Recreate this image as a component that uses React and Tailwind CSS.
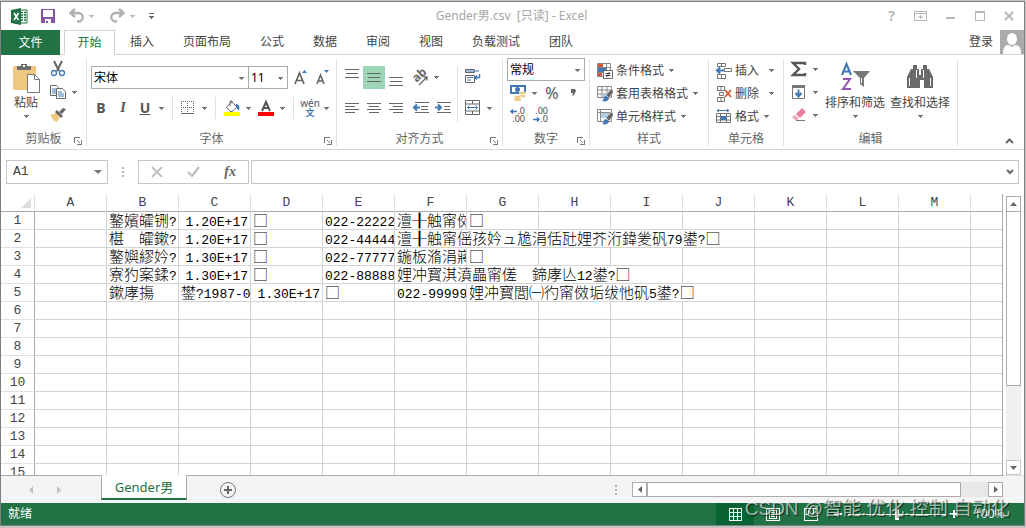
import React from "react";

const COLUMNS = ["A", "B", "C", "D", "E", "F", "G", "H", "I", "J", "K", "L", "M"];

// each cell: [text, colSpan, align]
const ROWS = [
    [[""], ["鐜嬪皬铏?"], ["1.20E+17", 1, "right"], ["□"], ["022-22222222"], ["澶╂触甯傚"], ["□"]],
    [[""], ["椹\u3000皬鏉?"], ["1.20E+17", 1, "right"], ["□"], ["022-44444444"], ["澶╂触甯傜孩妗ュ尯涓佸瓧娌芥洐鍏夎矾79鍙?□", 5]],
    [[""], ["鐜嬩繆妗?"], ["1.30E+17", 1, "right"], ["□"], ["022-77777777"], ["鍦板潃涓嶈"], ["□"]],
    [[""], ["寮犳案鍒?"], ["1.30E+17", 1, "right"], ["□"], ["022-88888888"], ["娌冲寳淇濆畾甯傞\u3000鍗庨亾12鍙?□", 4]],
    [[""], ["鏉庨摥"], ["鐢?1987-01"], ["1.30E+17", 1, "right"], ["□"], ["022-99999999"], ["娌冲寳閭㈠彴甯傚垢绂忚矾5鍙?□", 4]],
    [], [], [], [], [], [], [], [], [], [],
];

const TABS = ["插入", "页面布局", "公式", "数据", "审阅", "视图", "负载测试", "团队"];

const Caret = ({ className = "" }) => (
    <svg className={`shrink-0 ${className}`} width="5" height="3" viewBox="0 0 5 3" fill="#777" shapeRendering="crispEdges">
        <path d="M0 0h5v1H4v1H3v1H2V2H1V1H0z" />
    </svg>
);

const Icon = ({ w = 16, h = 16, children, ...rest }) => (
    <svg className="shrink-0 overflow-visible" width={w} height={h} viewBox={`0 0 ${w} ${h}`} fill="none" {...rest}>
        {children}
    </svg>
);

const IconButton = ({ label, className = "", children }) => (
    <button aria-label={label} className={`flex items-center justify-center shrink-0 ${className}`}>
        {children}
    </button>
);

const Select = ({ label, value, className = "" }) => (
    <div className={`relative border border-[#ababab] bg-white ${className}`}>
        <select aria-label={label} defaultValue={value} className="appearance-none block w-full h-full pl-[2px] pr-3 text-xs text-black bg-transparent outline-none">
            <option>{value}</option>
        </select>
        <Caret className="absolute right-1 top-1/2 -mt-px pointer-events-none" />
    </div>
);

const Launcher = () => (
    <Icon w={8} h={8} shapeRendering="crispEdges">
        <path d="M.5 6V.5H6M3 3l3 3M7.500 3v4.500H3" stroke="#777" />
    </Icon>
);

const Group = ({ title, className = "", launcher, children }) => (
    <section className={`flex flex-col h-[87px] shrink-0 border-r border-[#e1e1e1] ${className}`}>
        <div className="flex-1">{children}</div>
        <div className="flex items-center h-[14px] text-xs text-[#666]">
            <span className="w-3" />
            <span className="flex-1 text-center">{title}</span>
            <span className="w-3 pt-1">{launcher && <button aria-label={title} className="block"><Launcher /></button>}</span>
        </div>
    </section>
);

const Lines = ({ d }) => (
    <Icon w={14} h={12} shapeRendering="crispEdges">
        <path d={d} stroke="#666" />
    </Icon>
);

const VSep = ({ className = "" }) => <span className={`w-px bg-[#e1e1e1] ${className}`} />;

const TitleBar = () => (
    <header className="flex items-center h-7 shrink-0">
        <div className="flex items-center w-[240px] pl-[10px]">
            <Icon w={17} h={17}>
                <path d="M9 2h7v13H9z" fill="#fff" stroke="#217346" />
                <path d="M10 4.500h2m1 0h2M10 7h2m1 0h2M10 9.500h2m1 0h2M10 12h2m1 0h2" stroke="#217346" strokeWidth="1.500" />
                <path d="M0 2l10-2v17L0 15z" fill="#217346" />
                <path d="M3 5l4.500 7M7.500 5L3 12" stroke="#fff" strokeWidth="1.600" />
            </Icon>
            <IconButton label="保存" className="ml-[13px]">
                <Icon w={14} h={14} shapeRendering="crispEdges">
                    <path d="M0 0h14v14H0z" fill="#8653a6" />
                    <path d="M2 1h10v7H2zM4 10h6v4H7v-2H5v2H4z" fill="#fff" />
                </Icon>
            </IconButton>
            <IconButton label="撤消" className="ml-[14px] gap-[5px]">
                <Icon w={15} h={14}>
                    <path d="M6 0L1.500 4 6 8M2 4h7.500a4 4 0 0 1 0 8.500H8" stroke="#b1b1b1" strokeWidth="2.400" />
                </Icon>
                <Caret className="opacity-50" />
            </IconButton>
            <IconButton label="恢复" className="ml-4 gap-[5px]">
                <Icon w={15} h={14}>
                    <path d="M9 0l4.500 4L9 8M13 4H5.500a4 4 0 0 0 0 8.500H7" stroke="#b1b1b1" strokeWidth="2.400" />
                </Icon>
                <Caret className="opacity-50" />
            </IconButton>
            <IconButton label="自定义快速访问工具栏" className="ml-[14px]">
                <Icon w={5} h={6} shapeRendering="crispEdges">
                    <path d="M0 0h5v1H0zM0 3h5v1H4v1H3v1H2V5H1V4H0z" fill="#666" />
                </Icon>
            </IconButton>
        </div>
        <h1 className="flex-1 text-center text-xs text-[#a6a6a6] whitespace-pre pl-7">Gender男.csv  [只读] - Excel</h1>
        <div className="flex items-center justify-end gap-[19px] w-[270px] pr-[10px] text-[#b8b8b8]">
            <button aria-label="帮助" className="text-sm font-bold leading-4">?</button>
            <IconButton label="功能区显示选项">
                <Icon w={13} h={10} shapeRendering="crispEdges">
                    <path d="M.5.5h12v9H.5zM1 2.500h11M6.500 4v4M4 6.500h1M5 5.500h3M8 6.500h1" stroke="currentColor" />
                </Icon>
            </IconButton>
            <IconButton label="最小化">
                <Icon w={10} h={10}><path d="M0 7h9" stroke="currentColor" strokeWidth="2" /></Icon>
            </IconButton>
            <IconButton label="最大化">
                <Icon w={10} h={10} shapeRendering="crispEdges"><path d="M.5.5h9v9H.5zM0 1.500h10" stroke="currentColor" /></Icon>
            </IconButton>
            <IconButton label="关闭">
                <Icon w={10} h={10}><path d="M1 1l8 8M9 1L1 9" stroke="currentColor" strokeWidth="2" /></Icon>
            </IconButton>
        </div>
    </header>
);

const TabBar = () => (
    <nav className="flex h-[25px] shrink-0 text-xs text-[#444]">
        <button className="w-[59px] bg-[#217346] text-white">文件</button>
        <span className="w-1 border-b border-[#d4d4d4]" />
        <button className="w-[51px] border border-b-0 border-[#d4d4d4] text-[#217346]">开始</button>
        <div className="flex flex-1 items-center gap-[29px] pl-[15px] border-b border-[#d4d4d4]">
            {TABS.map((tab) => <button key={tab}>{tab}</button>)}
            <button className="ml-auto mr-[2px]">登录</button>
        </div>
        <span className="w-[29px] pl-[5px] border-b border-[#d4d4d4]">
            <Icon w={24} h={24}>
                <path d="M0 0h24v24H0z" fill="#ababab" />
                <ellipse cx="12" cy="9" rx="5" ry="6" fill="#fff" />
                <path d="M3 24c0-7 2-9 6-9l3 2 3-2c4 0 6 2 6 9z" fill="#fff" />
            </Icon>
        </span>
    </nav>
);

const ClipboardGroup = () => (
    <Group title="剪贴板" className="w-[86px]" launcher>
        <div className="flex pl-[11px]">
            <button className="flex flex-col items-center w-7 pt-1 text-xs leading-4 text-[#444]">
                <Icon w={29} h={32}>
                    <path d="M2 3h22v10h-9v14H2a1 1 0 0 1-1-1V4z" fill="#edc87e" />
                    <path d="M5 7V3h4V1h6v2h4v4z" fill="#6d6d6d" />
                    <path d="M11 2h2v2h-2z" fill="#fff" />
                    <path d="M15.500 11.500h7l5 5v13h-12zM22.500 11.500v5h5" fill="#fff" stroke="#777" />
                </Icon>
                <span className="whitespace-nowrap">粘贴</span>
                <Caret className="mt-1" />
            </button>
            <div className="flex flex-col gap-[7px] pl-[10px] pt-[2px]">
                <IconButton label="剪切" className="w-4">
                    <Icon w={14}>
                        <path d="M3 0l5 10M11 0L6 10" stroke="#666" strokeWidth="2" />
                        <circle cx="3" cy="12" r="2.500" stroke="#3f78b4" strokeWidth="1.300" />
                        <circle cx="11" cy="12" r="2.500" stroke="#3f78b4" strokeWidth="1.300" />
                    </Icon>
                </IconButton>
                <div className="flex items-center gap-[6px]">
                    <IconButton label="复制">
                        <Icon>
                            <path d="M.5 1.500h6l2 2v8h-8z" fill="#fff" stroke="#666" />
                            <path d="M2 5h4M2 7h4M2 9h4" stroke="#3f78b4" />
                            <path d="M6.500 4.500h6l3 3v7h-9z" fill="#fff" stroke="#666" />
                            <path d="M8 8h4M8 10h6M8 12h6" stroke="#3f78b4" />
                        </Icon>
                    </IconButton>
                    <Caret />
                </div>
                <IconButton label="格式刷" className="w-4">
                    <Icon>
                        <path d="M0 8l6-2 4 4-3 5-3-1z" fill="#edc87e" />
                        <path d="M5 5l2-2 6 6-2 2zM9 5l4-4 3 1-4 5z" fill="#666" />
                    </Icon>
                </IconButton>
            </div>
        </div>
    </Group>
);

const FontGroup = () => (
    <Group title="字体" className="w-[250px]" launcher>
        <div className="flex items-center pl-1 pt-[7px]">
            <Select label="字体" value="宋体" className="w-[158px] h-[23px]" />
            <Select label="字号" value="11" className="w-10 h-[23px] -ml-px" />
            <IconButton label="增大字号" className="ml-[6px]">
                <Icon w={14} h={15}>
                    <path d="M1 14L5.500 3 10 14M3 10.500h5" stroke="#666" strokeWidth="1.700" />
                    <path d="M8 3l2.500-3L13 3z" fill="#3f78b4" />
                </Icon>
            </IconButton>
            <IconButton label="减小字号" className="ml-2">
                <Icon w={14} h={15}>
                    <path d="M1 14l3.500-9L8 14M2.500 11h4" stroke="#666" strokeWidth="1.600" />
                    <path d="M8 0l2.500 3L13 0z" fill="#3f78b4" />
                </Icon>
            </IconButton>
        </div>
        <div className="flex items-center h-[22px] mt-2 pl-2 text-sm text-[#555]">
            <button className="w-3 font-bold">B</button>
            <button className="w-3 ml-[10px] italic font-bold font-['Liberation_Serif',serif]">I</button>
            <button className="w-3 ml-[10px] font-bold underline">U</button>
            <Caret className="ml-2" />
            <VSep className="h-[22px] ml-2" />
            <IconButton label="边框" className="ml-2">
                <Icon w={14} h={14} shapeRendering="crispEdges">
                    <path d="M.5 0v13M6.500 0v13M12.500 0v13M0 .5h13M0 6.500h13" stroke="#666" strokeDasharray="1 1" />
                    <path d="M0 12.500h13" stroke="#666" />
                </Icon>
            </IconButton>
            <Caret className="ml-[7px]" />
            <VSep className="h-[22px] ml-2" />
            <IconButton label="填充颜色" className="ml-2">
                <Icon w={16} h={16}>
                    <path d="M2.500 7L8 2l5 5-5 4.500H6z" fill="#fff" stroke="#666" />
                    <path d="M6 6V1h2v2" stroke="#666" />
                    <path d="M12 4c4 0 4 4 2.500 7L12 7z" fill="#3f78b4" />
                    <path d="M0 12h16v4H0z" fill="#ff0" />
                </Icon>
            </IconButton>
            <Caret className="ml-[6px]" />
            <IconButton label="字体颜色" className="ml-[7px]">
                <Icon w={16} h={16}>
                    <path d="M4 11L8 2l4 9M5 8h6" stroke="#555" strokeWidth="2" />
                    <path d="M0 12h16v4H0z" fill="#f00" />
                </Icon>
            </IconButton>
            <Caret className="ml-[6px]" />
            <VSep className="h-[22px] ml-2" />
            <button className="flex flex-col items-center w-4 ml-2">
                <span className="text-[10px] leading-[9px]">wén</span>
                <span className="text-[9px] leading-[9px] font-bold text-[#3f78b4]">文</span>
            </button>
            <Caret className="ml-[6px]" />
        </div>
    </Group>
);

const AlignGroup = () => (
    <Group title="对齐方式" className="w-[166px]" launcher>
        <div className="flex pt-[7px] pl-1">
            <div className="flex flex-col gap-2">
                <div className="flex items-center h-[23px]">
                    <IconButton label="顶端对齐" className="w-[22px] h-[23px] pb-2"><Lines d="M0 1.500h14M1 5.500h12M0 9.500h14" /></IconButton>
                    <IconButton label="垂直居中" className="w-[22px] h-[23px] bg-[#9fd5b7]"><Lines d="M0 1.500h14M1 5.500h12M0 9.500h14" /></IconButton>
                    <IconButton label="底端对齐" className="w-[22px] h-[23px] pt-2"><Lines d="M0 1.500h14M1 5.500h12M0 9.500h14" /></IconButton>
                    <IconButton label="方向" className="ml-[6px] gap-1">
                        <Icon w={17} h={16}>
                            <text x="2" y="11" fontSize="12" fontWeight="bold" fill="#666" transform="rotate(-42 5 10)">ab</text>
                            <path d="M6 15l8-8M10.500 7H14v3.500" stroke="#666" strokeWidth="1.300" />
                        </Icon>
                        <Caret />
                    </IconButton>
                </div>
                <div className="flex items-center h-[22px]">
                    <IconButton label="左对齐" className="w-[22px]"><Lines d="M0 1.500h14M0 4.500h10M0 7.500h14M0 10.500h10" /></IconButton>
                    <IconButton label="居中" className="w-[22px]"><Lines d="M0 1.500h14M2 4.500h10M0 7.500h14M2 10.500h10" /></IconButton>
                    <IconButton label="右对齐" className="w-[22px]"><Lines d="M0 1.500h14M4 4.500h10M0 7.500h14M4 10.500h10" /></IconButton>
                    <IconButton label="减少缩进量" className="ml-[6px]">
                        <Icon w={16} h={12}>
                            <path d="M2 .5h14M8 4.500h7M8 7.500h7M2 10.500h14" stroke="#666" />
                            <path d="M1 5.500h6M4 2.500l-3 3 3 3" stroke="#3f78b4" strokeWidth="2" />
                        </Icon>
                    </IconButton>
                    <IconButton label="增加缩进量" className="ml-[6px]">
                        <Icon w={16} h={12}>
                            <path d="M2 .5h14M9 4.500h6M9 7.500h6M2 10.500h14" stroke="#666" />
                            <path d="M0 5.500h6M3 2.500l3 3-3 3" stroke="#3f78b4" strokeWidth="2" />
                        </Icon>
                    </IconButton>
                </div>
            </div>
            <VSep className="h-14 ml-[6px]" />
            <div className="flex flex-col gap-4 pl-[7px] pt-[2px]">
                <IconButton label="自动换行" className="w-4">
                    <Icon>
                        <path d="M.5 1.500h9v3h-9zM.5 7.500h9v7h-9z" stroke="#666" />
                        <path d="M1 3h13M2 9.500h6M2 12h4" stroke="#3f78b4" />
                        <path d="M14.500 6v3.500H10M12 7.500L9.500 9.500l2.500 2" stroke="#3f78b4" strokeWidth="1.400" />
                    </Icon>
                </IconButton>
                <div className="flex items-center gap-[6px]">
                    <IconButton label="合并后居中">
                        <Icon>
                            <path d="M.5.5h14v14H.5zM1 4h13M1 11h13M7.500 1v3M7.500 11v3" stroke="#666" />
                            <path d="M2 7.500h11M4.500 5.500l-2 2 2 2M10.500 5.500l2 2-2 2" stroke="#3f78b4" />
                        </Icon>
                    </IconButton>
                    <Caret />
                </div>
            </div>
        </div>
    </Group>
);

const NumberGroup = () => (
    <Group title="数字" className="w-[87px]" launcher>
        <div className="flex flex-col pl-1 -mt-px">
            <Select label="数字格式" value="常规" className="w-[78px] h-[23px]" />
            <div className="flex items-center h-[18px] mt-[3px] pl-[3px] text-[#555]">
                <IconButton label="会计数字格式" className="gap-[6px]">
                    <Icon w={16}>
                        <path d="M1 1h14v7H1z" fill="#fff" stroke="#3f78b4" strokeWidth="2" />
                        <circle cx="7.500" cy="4.500" r="2.500" fill="#3f78b4" />
                        <ellipse cx="12.500" cy="8" rx="3.500" ry="1.500" fill="#edc87e" stroke="#fff" strokeWidth=".5" />
                        <ellipse cx="12.500" cy="11" rx="3.500" ry="1.500" fill="#edc87e" stroke="#fff" strokeWidth=".5" />
                        <ellipse cx="7.500" cy="12" rx="3.500" ry="1.500" fill="#edc87e" stroke="#fff" strokeWidth=".5" />
                        <ellipse cx="7.500" cy="14.500" rx="3.500" ry="1.500" fill="#edc87e" />
                    </Icon>
                    <Caret />
                </IconButton>
                <button className="w-[14px] ml-2 text-base leading-4">%</button>
                <IconButton label="千位分隔样式" className="ml-3">
                    <Icon w={5} h={8}><path d="M0 0h4l1 2-2 4-2 1 1-3H0z" fill="#666" /></Icon>
                </IconButton>
            </div>
            <div className="flex gap-2 mt-[5px] pl-[3px] text-[9px] leading-[8px] text-[#444]">
                <button aria-label="增加小数位数" className="flex flex-col items-end w-[15px]">
                    <span className="flex items-center">
                        <Icon w={7} h={5}><path d="M1 2.500h6M3 .5l-2 2 2 2" stroke="#3f78b4" strokeWidth="1.500" /></Icon>
                        .0
                    </span>
                    <span>.00</span>
                </button>
                <button aria-label="减少小数位数" className="flex flex-col items-end w-[15px]">
                    <span>.00</span>
                    <span className="flex items-center">
                        <Icon w={7} h={5}><path d="M0 2.500h6M4 .5l2 2-2 2" stroke="#3f78b4" strokeWidth="1.500" /></Icon>
                        .0
                    </span>
                </button>
            </div>
        </div>
    </Group>
);

const MenuRow = ({ icon, label, className = "" }) => (
    <button className={`flex items-center h-[23px] text-xs text-[#444] whitespace-nowrap ${className}`}>
        {icon}
        <span className="ml-[3px]">{label}</span>
        <Caret className="ml-[5px]" />
    </button>
);

const Brush = () => (
    <>
        <path d="M9 9l5-6 2 1v3l-4 5z" fill="#666" stroke="#fff" strokeWidth=".5" />
        <path d="M5 15c2 0 1-5 4-5l3 2c0 3-4 4-7 3z" fill="#3f78b4" />
    </>
);

const StylesGroup = () => (
    <Group title="样式" className="w-[119px]">
        <div className="flex flex-col items-start pl-[7px]">
            <MenuRow label="条件格式" icon={
                <Icon>
                    <path d="M.5.5h13v13H.5zM1 4.500h12M1 9.500h12M9.500 1v12" stroke="#888" />
                    <path d="M1 1h5v3H1zM1 10h4v3H1z" fill="#d65532" />
                    <path d="M1 5h8v4H1z" fill="#3f78b4" />
                    <path d="M6.500 7.500h9v8h-9z" fill="#fff" stroke="#666" />
                    <path d="M8.500 10.500h5M8.500 12.500h5M12.500 9l-3 5" stroke="#444" />
                </Icon>
            } />
            <MenuRow label="套用表格格式" icon={
                <Icon>
                    <path d="M.5.5h14v11H.5zM1 4h13M1 8h13M5 1v10M10 1v10" stroke="#888" />
                    <path d="M5 8h5v3H5z" fill="#aecbe8" />
                    <Brush />
                </Icon>
            } />
            <MenuRow label="单元格样式" icon={
                <Icon>
                    <path d="M.5.5h14v12H.5zM1 3.500h13M3.500 1v11" stroke="#888" />
                    <path d="M4 4h9v5H4z" fill="#aecbe8" />
                    <Brush />
                </Icon>
            } />
        </div>
    </Group>
);

const CellsGroup = () => (
    <Group title="单元格" className="w-[75px]">
        <div className="flex flex-col items-start pl-[7px]">
            <MenuRow label="插入" className="[&>svg:last-child]:ml-[10px]" icon={
                <Icon>
                    <path d="M1.500.5h8v3h-8zM5.500 0v3M1.500 11.500h8v4h-8zM5.500 11v4M8.500 5.500h7v3h-7z" stroke="#777" />
                    <path d="M1 7.500h7M4 4.500l-3 3 3 3" stroke="#3f78b4" strokeWidth="2" />
                </Icon>
            } />
            <MenuRow label="删除" className="[&>svg:last-child]:ml-[10px]" icon={
                <Icon>
                    <path d="M1.500.5h7v4h-7zM5 1v3M1.500 11.500h7v4h-7zM5 11v4M3.500 6.500h4v3h-4z" stroke="#777" />
                    <path d="M9 4l6 7M15 4l-6 7" stroke="#d65532" strokeWidth="1.800" />
                </Icon>
            } />
            <MenuRow label="格式" className="[&>svg:last-child]:ml-[5px]" icon={
                <Icon>
                    <path d="M1 1.500h12M3 0L1 1.500 3 3M11 0l2 1.500L11 3" stroke="#3f78b4" />
                    <path d="M.5 4.500h14v9H.5zM1 7.500h13M1 11h13M4.500 5v8M10.500 5v8" stroke="#777" />
                    <path d="M5 7h5v4H5z" fill="#3f78b4" />
                </Icon>
            } />
        </div>
    </Group>
);

const EditingGroup = () => (
    <Group title="编辑" className="w-[174px]">
        <div className="flex pl-[7px]">
            <div className="flex flex-col gap-[7px] pt-[2px]">
                <IconButton label="自动求和" className="gap-[6px]">
                    <Icon><path d="M14 4V2H2l6 6-6 6h12v-2" stroke="#555" strokeWidth="2.400" /></Icon>
                    <Caret />
                </IconButton>
                <IconButton label="填充" className="gap-[6px]">
                    <Icon>
                        <path d="M1.500 1.500h12v13h-12z" stroke="#777" />
                        <path d="M1 1h13v3H1z" fill="#777" />
                        <path d="M7.500 5.500v7M4.500 9l3 3.500 3-3.500" stroke="#3f78b4" strokeWidth="2" />
                    </Icon>
                    <Caret />
                </IconButton>
                <IconButton label="清除" className="gap-[6px]">
                    <Icon>
                        <path d="M5 7l6-6 4 4-6 6z" fill="#e8829a" />
                        <path d="M4 8l4 4-2 1H4L1 10z" fill="#f1a9b9" />
                        <path d="M5 13.500h9" stroke="#777" />
                    </Icon>
                    <Caret />
                </IconButton>
            </div>
            <button className="flex flex-col items-center w-[60px] ml-[7px] pt-1 text-xs leading-4 text-[#444] whitespace-nowrap">
                <Icon w={30} h={32}>
                    <path d="M2 12L6.500 1 11 12M3.500 8.500h6" stroke="#3f78b4" strokeWidth="2" />
                    <path d="M3 16h7L3 26h8" stroke="#9455b4" strokeWidth="2" />
                    <path d="M13 8h17l-6 7v9l-4-3v-6z" fill="#777" />
                    <path d="M21.500 15v5" stroke="#fff" />
                </Icon>
                <span>排序和筛选</span>
                <Caret className="mt-1" />
            </button>
            <button className="flex flex-col items-center w-[60px] ml-[5px] pt-1 text-xs leading-4 text-[#444] whitespace-nowrap">
                <Icon w={28} h={32}>
                    <path d="M7 2h4v4h2v6h2V6h2V2h4v4h2l4 8v11h-9v-8h-4v8H1V14l4-8h2z" fill="#6a6a6a" />
                    <path d="M3.500 15v8M10.500 7v8M17.500 7v8M24.500 15v8" stroke="#fff" />
                </Icon>
                <span>查找和选择</span>
                <Caret className="mt-1" />
            </button>
        </div>
    </Group>
);

const FormulaBar = () => (
    <div className="flex items-center h-11 shrink-0 pl-[5px] pr-[5px]">
        <div className="flex items-center justify-between w-[102px] h-6 pr-[5px] border border-[#c6c6c6]">
            <input aria-label="名称框" defaultValue="A1" className="w-16 pl-[6px] text-[13px] text-[#444] font-['Liberation_Mono',monospace] outline-none" />
            <IconButton label="名称列表">
                <Icon w={8} h={4}><path d="M0 0h8L4 4z" fill="#777" /></Icon>
            </IconButton>
        </div>
        <span className="w-[30px] flex justify-center">
            <Icon w={2} h={10}><path d="M0 0h2v2H0zM0 4h2v2H0zM0 8h2v2H0z" fill="#b5b5b5" /></Icon>
        </span>
        <div className="flex items-center justify-between w-[111px] h-6 px-3 border border-[#c6c6c6]">
            <IconButton label="取消"><Icon w={12} h={12}><path d="M1 1l10 10M11 1L1 11" stroke="#c0c0c0" strokeWidth="1.800" /></Icon></IconButton>
            <IconButton label="输入"><Icon w={13} h={12}><path d="M1 6l4 4 7-9" stroke="#c0c0c0" strokeWidth="2.400" /></Icon></IconButton>
            <button className="text-sm italic font-bold text-[#666] font-['Liberation_Serif',serif]">fx</button>
        </div>
        <div className="flex flex-1 items-center h-6 ml-[2px] pr-1 border border-[#c6c6c6]">
            <input aria-label="编辑栏" className="flex-1 outline-none" />
            <IconButton label="展开编辑栏"><Icon w={8} h={6}><path d="M1 1l3 3 3-3" stroke="#666" strokeWidth="2" /></Icon></IconButton>
        </div>
    </div>
);

const Cell = ({ cell }) => {
    const [text, span = 1, align] = cell;
    return (
        <td
            colSpan={span}
            className={`h-[18px] p-0 pl-[2px] border-r border-b border-[#d4d4d4] overflow-hidden whitespace-nowrap text-[15px] leading-[17px] font-light text-black ${align === "right" ? "text-right pr-[2px]" : ""}`}
        >
            {/* latin runs are narrower than the CJK ones */}
            <div className="h-[17px]">
                {text.split(/([\w?.+-]+)/).map((run, i) => (
                    i % 2 ? <span key={i} className="text-[13px] font-['Liberation_Mono',monospace]">{run}</span> : run
                ))}
            </div>
        </td>
    );
};

const Sheet = () => (
    <div className="flex flex-1 min-h-0">
        <div className="flex-1 min-w-0 overflow-hidden border-r border-[#ababab]">
            <table className="table-fixed w-full border-separate border-spacing-0">
                <colgroup>
                    <col className="w-[34px]" />
                    {COLUMNS.map((c) => <col key={c} className="w-[72px]" />)}
                    <col />
                </colgroup>
                <thead>
                    <tr className="text-[13px] leading-4 text-[#444] font-['Liberation_Mono',monospace]">
                        <th className="h-[18px] p-0 border-r border-b border-r-[#e1e1e1] border-b-[#ababab]">
                            <span className="flex justify-end pr-[3px]">
                                <Icon w={10} h={10}><path d="M10 0v10H0z" fill="#dcdcdc" /></Icon>
                            </span>
                        </th>
                        {COLUMNS.map((c) => (
                            <th key={c} className="h-[18px] p-0 pt-px font-normal border-r border-b border-r-[#e1e1e1] border-b-[#ababab]">{c}</th>
                        ))}
                        <th className="border-b border-[#ababab]" />
                    </tr>
                </thead>
                <tbody>
                    {ROWS.map((row, i) => {
                        const used = row.reduce((n, cell) => n + (cell[1] || 1), 0);
                        const rest = Array(COLUMNS.length - used).fill([""]);
                        return (
                            <tr key={i}>
                                <th className="h-[18px] p-0 font-normal text-[13px] leading-[17px] text-[#444] font-['Liberation_Mono',monospace] border-r border-b border-r-[#ababab] border-b-[#e1e1e1]">{i + 1}</th>
                                {[...row, ...rest].map((cell, j) => <Cell key={j} cell={cell} />)}
                                <td className="border-b border-[#d4d4d4]" />
                            </tr>
                        );
                    })}
                </tbody>
            </table>
        </div>
        <div className="flex flex-col w-[15px] ml-[3px] mr-[3px] mt-[2px] bg-[#f0f0f0]">
            <button aria-label="向上滚动" className="flex items-center justify-center h-4 border border-[#ababab] bg-white">
                <Icon w={7} h={4}><path d="M0 4h7L3.500 0z" fill="#666" /></Icon>
            </button>
            <div className="h-[174px] border border-t-0 border-[#ababab] bg-white" />
            <button aria-label="向下滚动" className="flex items-center justify-center h-[15px] mt-auto border border-[#c6c6c6] bg-white">
                <Icon w={7} h={4}><path d="M0 0h7L3.500 4z" fill="#666" /></Icon>
            </button>
        </div>
    </div>
);

const SheetTabs = () => (
    <div className="flex h-7 shrink-0 bg-[#f4f4f4]">
        <div className="flex items-center justify-between w-[100px] pl-7 pr-10 border-t border-[#ababab]">
            <IconButton label="上一个工作表"><Icon w={4} h={8}><path d="M4 0v8L0 4z" fill="#c0c0c0" /></Icon></IconButton>
            <IconButton label="下一个工作表"><Icon w={4} h={8}><path d="M0 0v8l4-4z" fill="#c0c0c0" /></Icon></IconButton>
        </div>
        <button className="w-[86px] h-[25px] bg-white border-x border-x-[#ababab] border-b-2 border-b-[#217346] text-[13px] leading-5 text-[#217346]">
            Gender男
        </button>
        <div className="flex flex-1 items-center pl-8 border-t border-[#ababab]">
            <IconButton label="新工作表">
                <Icon w={18} h={18}>
                    <circle cx="9" cy="9" r="7.500" stroke="#777" />
                    <path d="M9 5v8M5 9h8" stroke="#666" strokeWidth="2" />
                </Icon>
            </IconButton>
            <span className="ml-auto mr-[15px]">
                <Icon w={2} h={10}><path d="M0 0h2v2H0zM0 4h2v2H0zM0 8h2v2H0z" fill="#b5b5b5" /></Icon>
            </span>
            <div className="flex w-[371px] h-[15px] bg-[#e8e8e8]">
                <button aria-label="向左滚动" className="flex items-center justify-center w-[15px] border border-[#ababab] bg-white">
                    <Icon w={4} h={7}><path d="M4 0v7L0 3.500z" fill="#666" /></Icon>
                </button>
                <div className="w-[314px] border border-[#ababab] bg-white" />
                <button aria-label="向右滚动" className="flex items-center justify-center w-[15px] ml-auto border border-[#ababab] bg-white">
                    <Icon w={4} h={7}><path d="M0 0v7l4-3.500z" fill="#666" /></Icon>
                </button>
            </div>
        </div>
        <div className="w-[21px] border-t border-[#e1e1e1]" />
    </div>
);

const StatusBar = () => (
    <footer className="flex items-center h-[22px] shrink-0 pl-[7px] pr-5 bg-[#217346] text-xs text-white">
        <span>就绪</span>
        <div className="flex items-center h-full ml-auto">
            <IconButton label="普通" className="w-[38px] h-full bg-[#0a6332]">
                <Icon w={13} h={13} shapeRendering="crispEdges">
                    <path d="M.5.5h12v12H.5zM4.500 0v13M8.500 0v13M0 4.500h13M0 8.500h13" stroke="#fff" />
                </Icon>
            </IconButton>
            <IconButton label="页面布局" className="w-[38px]">
                <Icon w={14} h={13} shapeRendering="crispEdges">
                    <path d="M.5.5h13v12H.5zM3.500 2.500h7v8h-7zM5 4.500h4M5 6.500h4M5 8.500h4" stroke="#fff" />
                </Icon>
            </IconButton>
            <IconButton label="分页预览" className="w-[38px]">
                <Icon w={14} h={13} shapeRendering="crispEdges">
                    <path d="M.5.5h13v12H.5zM1 6.500h3v-5M9.500 1v5h-3" stroke="#fff" />
                </Icon>
            </IconButton>
            <button aria-label="缩小" className="flex w-[10px] ml-1"><Icon w={8} h={8}><path d="M0 4h8" stroke="#fff" strokeWidth="2" /></Icon></button>
            <input
                type="range"
                aria-label="显示比例"
                className="appearance-none w-[98px] h-[11px] mx-1 bg-[linear-gradient(#fff,#fff)] bg-[length:100%_1px] bg-center bg-no-repeat [&::-webkit-slider-thumb]:appearance-none [&::-webkit-slider-thumb]:w-1 [&::-webkit-slider-thumb]:h-[11px] [&::-webkit-slider-thumb]:bg-white"
            />
            <button aria-label="放大" className="flex w-2"><Icon w={8} h={8}><path d="M0 4h8M4 0v8" stroke="#fff" strokeWidth="2" /></Icon></button>
            <button className="w-[30px] ml-4">100%</button>
        </div>
    </footer>
);

const App = () => (
    <div className="relative h-screen pt-px pr-px pb-[2px] bg-[#c4c4c4] overflow-hidden font-['Noto_Sans','Noto_Sans_CJK_SC',sans-serif]">
        <div className="flex flex-col h-full border border-[#7f7f7f] bg-white">
            <TitleBar />
            <TabBar />
            <div className="flex h-[95px] shrink-0 pt-1 border-b border-[#d4d4d4]">
                <ClipboardGroup />
                <FontGroup />
                <AlignGroup />
                <NumberGroup />
                <StylesGroup />
                <CellsGroup />
                <EditingGroup />
                <IconButton label="折叠功能区" className="ml-auto mt-auto mr-[10px] mb-[5px]">
                    <Icon w={9} h={6}><path d="M1 5l3.500-3.500L8 5" stroke="#666" strokeWidth="2" /></Icon>
                </IconButton>
            </div>
            <FormulaBar />
            <Sheet />
            <SheetTabs />
            <StatusBar />
        </div>
        <p className="absolute right-4 bottom-[7px] text-[19px] leading-6 whitespace-nowrap text-white/60 [text-shadow:1px_1px_1px_rgba(0,0,0,0.6)] pointer-events-none font-['Liberation_Sans','Noto_Sans_CJK_SC',sans-serif]">
            CSDN @智能.优化.控制.自动化
        </p>
    </div>
);

export default App;
